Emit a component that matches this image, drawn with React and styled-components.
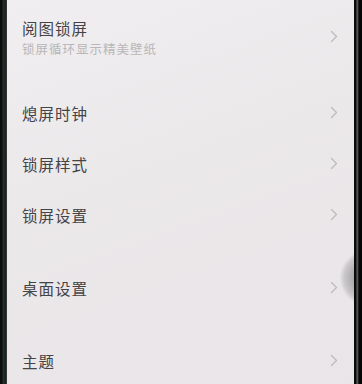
import React from 'react'
import styled, { createGlobalStyle } from 'styled-components'

const GlobalStyle = createGlobalStyle`
    html, body {
        margin: 0;
        padding: 0;
        background: #111;
    }
    body {
        font-family: "Noto Sans CJK SC", "Noto Sans", sans-serif;
    }
`

const Phone = styled.div`
    display: flex;
    flex-direction: row;
    width: 362px;
    height: 384px;
    overflow: hidden;
`
const LeftBezel = styled.div`
    width: 7px;
    flex-shrink: 0;
    background: linear-gradient(to right, #0c0e0d 0px, #0c0e0d 2px, #26302b 3px, #1b211e 6px, #4a4f4c 7px);
`
const RightBezel = styled.div`
    width: 8px;
    flex-shrink: 0;
    background: linear-gradient(to right, #0a0a0a 0px, #0a0a0a 2px, #6b6b6b 3px, #3a3a3a 4px, #050505 5px, #050505 8px);
`
const Screen = styled.div`
    position: relative;
    flex: 1;
    display: flex;
    flex-direction: column;
    padding-top: 12px;
    background: linear-gradient(160deg, #f0eef0 0%, #ebe8ea 45%, #e9e5e8 100%);
    overflow: hidden;
`
const Glare = styled.div`
    position: absolute;
    right: -22px;
    top: 250px;
    width: 36px;
    height: 56px;
    border-radius: 50%;
    background: radial-gradient(ellipse at 80% 50%, #8e8d8f 0%, #a6a5a7 35%, #c9c7c9 60%, rgba(225,222,225,0) 72%);
`
const Row = styled.div`
    display: flex;
    flex-direction: row;
    align-items: center;
    justify-content: space-between;
    height: 51px;
    flex-shrink: 0;
    margin-top: ${props => props.$gap || 0}px;
    padding: 0 16px 0 15px;
`
const Texts = styled.div`
    display: flex;
    flex-direction: column;
    gap: 5px;
`
const Title = styled.div`
    font-size: 15.5px;
    line-height: 18px;
    letter-spacing: 1px;
    color: #444345;
`
const Subtitle = styled.div`
    font-size: 12.5px;
    line-height: 14px;
    letter-spacing: 1px;
    color: #b8b6b8;
`
const Chevron = styled.svg`
    width: 8px;
    height: 13px;
    flex-shrink: 0;
    margin-top: ${props => props.$shift || 0}px;
`

const items = [
    { title: '阅图锁屏', sub: '锁屏循环显示精美壁纸', gap: 0 },
    { title: '熄屏时钟', gap: 24 },
    { title: '锁屏样式' },
    { title: '锁屏设置' },
    { title: '桌面设置', gap: 22 },
    { title: '主题', gap: 22 },
]

const Arrow = ({ shift }) => (
    <Chevron $shift={shift} viewBox="0 0 8 13">
        <path d="M1.5 1.5 L6.5 6.5 L1.5 11.5" fill="none" stroke="#bdbbbd" strokeWidth="1.3" strokeLinecap="round" strokeLinejoin="round" />
    </Chevron>
)

const App = () => {
    return (
        <Phone>
            <GlobalStyle />
            <LeftBezel />
            <Screen>
                {items.map(item => (
                    <Row key={item.title} $gap={item.gap}>
                        <Texts>
                            <Title>{item.title}</Title>
                            {item.sub && <Subtitle>{item.sub}</Subtitle>}
                        </Texts>
                        <Arrow shift={item.sub ? -2 : -1} />
                    </Row>
                ))}
                <Glare />
            </Screen>
            <RightBezel />
        </Phone>
    )
}

export default App
